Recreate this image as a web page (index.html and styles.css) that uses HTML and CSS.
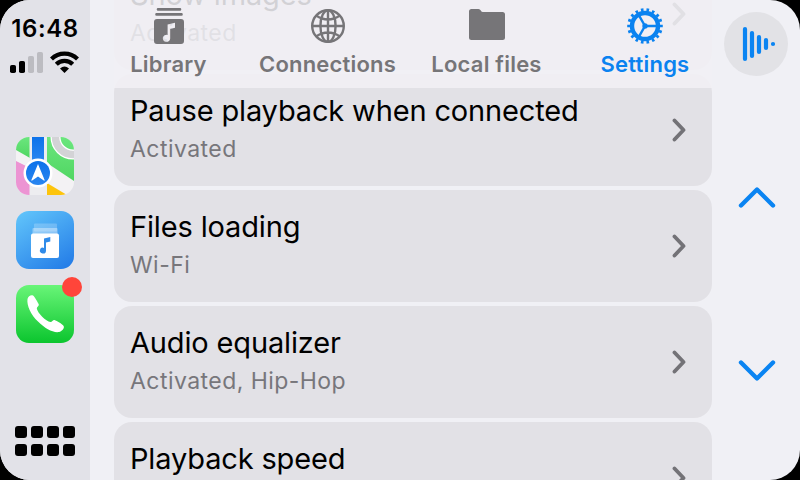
FILE: index.html
```html
<!DOCTYPE html>
<html lang="en">
<head>
<meta charset="utf-8">
<title>Settings</title>
<link rel="stylesheet" href="styles.css">
</head>
<body>
<div class="screen">
  <aside class="dock">
    <div class="clock">16:48</div>
    <svg class="status" width="70" height="24" viewBox="0 0 70 24">
      <rect x="0" y="15" width="6" height="8" rx="1.8"/>
      <rect x="9" y="11" width="6" height="12" rx="1.8"/>
      <rect class="dim" x="18" y="6" width="6" height="17" rx="1.8"/>
      <rect class="dim" x="27" y="2" width="6" height="21" rx="1.8"/>
      <path class="wave" d="M41.500 9a18.500 18.500 0 0 1 26 0M46.300 14.300a11.500 11.500 0 0 1 16.400 0"/>
      <path d="M50 18.500q4.500-3.800 9 0L54.500 23z"/>
    </svg>
    <nav class="apps">
      <svg class="app" viewBox="0 0 58 58">
        <defs>
          <linearGradient id="road" x2="0" y2="1"><stop stop-color="#0d72ea"/><stop offset="1" stop-color="#2a86f0"/></linearGradient>
          <linearGradient id="land" x2="0" y2="1"><stop stop-color="#6be67e"/><stop offset="1" stop-color="#50d662"/></linearGradient>
        </defs>
        <rect width="58" height="58" fill="#f3f2f4"/>
        <path d="M0 0H14V21L0 13z" fill="url(#land)"/>
        <path d="M0 24L14 31V58H0z" fill="#ec94d3"/>
        <path d="M31 0H58V44L31 26z" fill="url(#land)"/>
        <path d="M31 46L51 58H31z" fill="#fdc40c"/>
        <circle cx="57" cy="0" r="17.500" fill="none" stroke="#fff" stroke-width="10"/>
        <circle cx="57" cy="0" r="17.500" fill="none" stroke="#d3d3d6" stroke-width="7.500"/>
        <path d="M13.500 0H31V58H13.500z" fill="#ededf0"/>
        <path d="M16 0H28V24H16z" fill="url(#road)"/>
        <circle cx="22" cy="36" r="14.500" fill="#fff"/>
        <circle cx="22" cy="36" r="12" fill="url(#road)"/>
        <path d="M22 27L28.600 43Q28.800 44 27.800 43.600L22 39.500 16.200 43.600Q15.200 44 15.400 43z" fill="#fff"/>
      </svg>
      <svg class="app" viewBox="0 0 58 58">
        <defs><linearGradient id="sky" x1=".15" y1="0" x2=".8" y2="1"><stop stop-color="#5fc2fa"/><stop offset="1" stop-color="#267fe8"/></linearGradient></defs>
        <rect width="58" height="58" fill="url(#sky)"/>
        <rect x="18" y="12.500" width="23" height="8" rx="1" fill="#fff" opacity=".22"/>
        <rect x="16.500" y="17" width="25" height="8" rx="1" fill="#fff" opacity=".38"/>
        <rect x="15" y="22.500" width="28" height="24.500" rx="2" fill="#fff"/>
        <path d="M28 27.500l6.300-1.500v4.500l-4.300 1v8.200a3.100 2.900 0 1 1-2-2.800z" fill="#2f8be9"/>
      </svg>
      <div class="phone">
        <svg class="app" viewBox="0 0 58 58">
          <defs><linearGradient id="leaf" x2="0" y2="1"><stop stop-color="#69f578"/><stop offset="1" stop-color="#0bc52e"/></linearGradient></defs>
          <rect width="58" height="58" fill="url(#leaf)"/>
          <path d="M11.500 14C12 11.500 15 9.500 17 10.500C18.500 11.500 22 17.500 22.800 19.500C23.300 21 20.500 22 20.800 23.500C21.500 28 30 36.500 34.500 37C36 37.200 37 34.500 38.500 35C41 35.700 46 39 47.500 40.800C49 43 46 46.500 43 47C37 48 29 43.500 22 36.500C15 30 10.500 20.500 11.500 14z" fill="#fff"/>
        </svg>
        <span class="badge"></span>
      </div>
    </nav>
    <div class="grid"><i></i><i></i><i></i><i></i><i></i><i></i><i></i><i></i></div>
  </aside>

  <main class="content">
    <div class="list">
      <section class="row"><div><h2>Show images</h2><p>Activated</p></div><svg class="chev" viewBox="0 0 16 24"><path d="M3.500 2.500L12.500 12l-9 9.500"/></svg></section>
      <section class="row"><div><h2>Pause playback when connected</h2><p>Activated</p></div><svg class="chev" viewBox="0 0 16 24"><path d="M3.500 2.500L12.500 12l-9 9.500"/></svg></section>
      <section class="row"><div><h2>Files loading</h2><p>Wi-Fi</p></div><svg class="chev" viewBox="0 0 16 24"><path d="M3.500 2.500L12.500 12l-9 9.500"/></svg></section>
      <section class="row"><div><h2>Audio equalizer</h2><p>Activated, Hip-Hop</p></div><svg class="chev" viewBox="0 0 16 24"><path d="M3.500 2.500L12.500 12l-9 9.500"/></svg></section>
      <section class="row"><div><h2>Playback speed</h2></div><svg class="chev" viewBox="0 0 16 24"><path d="M3.500 2.500L12.500 12l-9 9.500"/></svg></section>
    </div>
    <nav class="tabs">
      <a class="tab library">
        <svg width="40" height="40" viewBox="0 0 40 40">
          <path d="M9 3.400H31M7.500 8.400H32.500" stroke="currentColor" stroke-width="2.600" stroke-linecap="round"/>
          <path fill="currentColor" fill-rule="evenodd" d="M8 13H32q3 0 3 3V35q0 3-3 3H8q-3 0-3-3V16q0-3 3-3zM18.600 18.600V29a3.700 3.500 0 1 0 2.600 3.400V23l4.800-1.200V16.800z"/>
        </svg>
        <span>Library</span>
      </a>
      <a class="tab connections">
        <svg width="40" height="40" viewBox="0 0 40 40" fill="none" stroke="currentColor" stroke-width="2.400">
          <circle cx="20" cy="20" r="15.800"/><ellipse cx="20" cy="20" rx="7.600" ry="15.800"/>
          <path d="M20 4V36M4 20H36M8 9.500Q20 17.500 32 9.500M8 30.500Q20 22.500 32 30.500"/>
        </svg>
        <span>Connections</span>
      </a>
      <a class="tab local">
        <svg width="40" height="40" viewBox="0 0 40 40"><path fill="currentColor" d="M2 5.500q0-2.500 2.500-2.500h7q1.500 0 2.300 1.500t2 1.500H35.500q2.500 0 2.500 2.500V31.500q0 2.500-2.500 2.500H4.500q-2.500 0-2.500-2.500z"/></svg>
        <span>Local files</span>
      </a>
      <a class="tab settings">
        <svg width="40" height="40" viewBox="0 0 40 40" fill="none" stroke="currentColor">
          <circle cx="20" cy="20" r="13" stroke-width="4.400"/>
          <circle cx="20" cy="20" r="16.300" stroke-width="3" pathLength="180" stroke-dasharray="4.600 5.400" stroke-dashoffset="2.300"/>
          <path stroke-width="2.400" d="M20 20H32M20 20L13.800 9.200M20 20L13.800 30.800"/>
          <circle cx="20" cy="20" r="1.700" stroke-width="2"/>
        </svg>
        <span>Settings</span>
      </a>
    </nav>
  </main>

  <aside class="controls">
    <button class="playing" aria-label="Now playing">
      <svg width="64" height="64" viewBox="0 0 64 64"><path d="M21 17V47M28 21V44M35 25V40M42 28V36M49 32h.01"/></svg>
    </button>
    <svg class="arrow up" width="40" height="24" viewBox="0 0 40 24"><path d="M4 19.500L20 3.500 36 19.500"/></svg>
    <svg class="arrow" width="40" height="24" viewBox="0 0 40 24"><path d="M4 4.500L20 20.500 36 4.500"/></svg>
  </aside>
</div>
</body>
</html>
```

FILE: styles.css
```css
* { box-sizing: border-box; }
body { margin: 0; background: #000; font-family: Inter, "Liberation Sans", sans-serif; }
.screen { display: flex; width: 800px; height: 480px; border-radius: 30px; background: #f0f0f5; overflow: hidden; }

.dock { width: 90px; background: #e2e2e8; display: flex; flex-direction: column; align-items: center; padding: 14px 0 24px; }
.clock { font-size: 24px; line-height: 30px; font-weight: 570; letter-spacing: 0.6px; }
.status { margin: 6px 0 0; }
.status .dim { fill: #bcbcc1; }
.status .wave { fill: none; stroke: #000; stroke-width: 4.2; }
.apps { margin-top: 63px; display: flex; flex-direction: column; gap: 16px; }
.app { display: block; width: 58px; height: 58px; border-radius: 13px; overflow: hidden; }
.phone { position: relative; }
.badge { position: absolute; top: -8px; right: -8px; width: 20px; height: 20px; border-radius: 50%; background: #ff453a; }
.grid { margin-top: auto; display: grid; grid-template-columns: repeat(4, 12px); gap: 6px 4px; }
.grid i { height: 12px; border-radius: 3px; background: #000; }

.content { position: relative; width: 622px; padding-left: 24px; height: 480px; overflow: hidden; }
.list { display: flex; flex-direction: column; gap: 4px; margin-top: -42px; }
.row { flex: none; height: 112px; border-radius: 18px; background: #e2e1e6; padding: 18px 25px 0 16px; display: flex; justify-content: space-between; }
.row h2 { margin: 0; font-size: 29px; line-height: 38px; font-weight: 400; letter-spacing: -0.15px; white-space: nowrap; }
.row p { margin: 2px 0 0; font-size: 23px; line-height: 34px; letter-spacing: 0.45px; color: #77767b; }
.chev { width: 16px; height: 24px; margin-top: 26px; }
.chev path { fill: none; stroke: #737277; stroke-width: 3.8; stroke-linecap: round; stroke-linejoin: round; }

.tabs { position: absolute; top: 0; left: 24px; right: 0; height: 88px; background: rgba(241, 240, 245, .87); display: flex; color: #767578; }
.tab { display: flex; flex-direction: column; align-items: center; padding-top: 6px; }
.tab svg { display: block; }
.tab span { font-size: 22px; line-height: 28px; margin-top: 4px; font-weight: 570; letter-spacing: 0.2px; white-space: nowrap; }
.library { width: 109px; }
.connections { width: 209px; }
.local { width: 109px; }
.settings { width: 171px; padding-left: 37px; color: #0a82f0; }

.controls { width: 88px; display: flex; flex-direction: column; align-items: center; padding-top: 12px; }
.playing { width: 64px; height: 64px; padding: 0; border: 0; border-radius: 50%; background: #e2e2e6; }
.playing svg { display: block; }
.playing path, .arrow path { fill: none; stroke: #0a84f2; stroke-width: 4.2; stroke-linecap: round; stroke-linejoin: round; }
.arrow path { stroke-width: 4.4; }
.arrow { margin: 148px 0 0 1px; }
.arrow.up { margin-top: 110px; }
```
